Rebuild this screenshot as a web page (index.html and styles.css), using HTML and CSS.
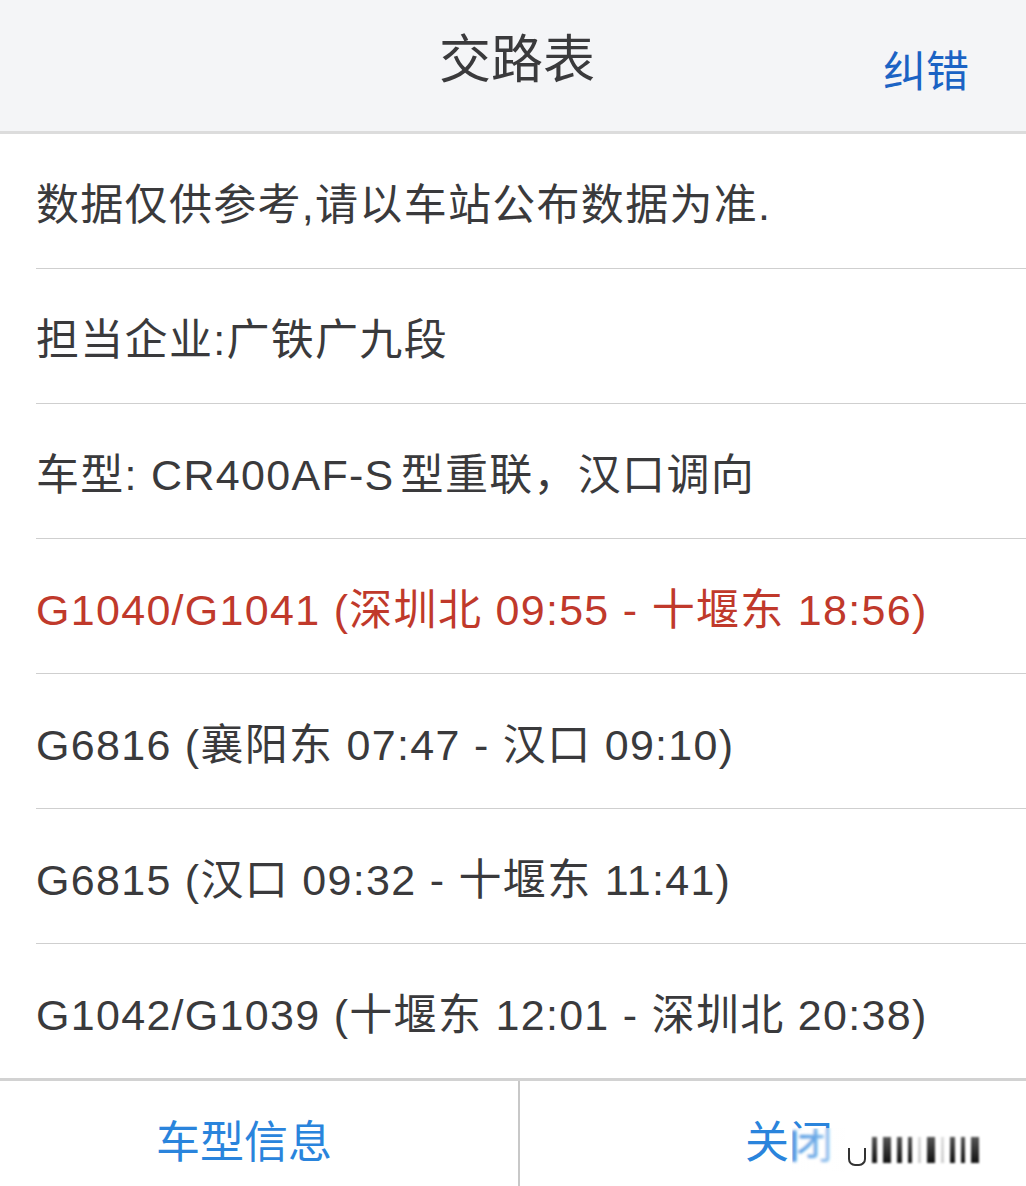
FILE: index.html
```html
<!DOCTYPE html>
<html lang="zh">
<head>
<meta charset="UTF-8">
<title>交路表</title>
<link rel="stylesheet" href="styles.css">
</head>
<body>
<div class="sheet">
  <div class="topbar">
    <span class="title">交路表</span>
    <a class="fix-btn">纠错</a>
  </div>
  <ul class="rows">
    <li class="row">数据仅供参考,请以车站公布数据为准.</li>
    <li class="row">担当企业:广铁广九段</li>
    <li class="row">车型: CR400AF-S<span class="gap"></span>型重联，汉口调向</li>
    <li class="row current">G1040/G1041 (深圳北 09:55 - 十堰东 18:56)</li>
    <li class="row">G6816 (襄阳东 07:47 - 汉口 09:10)</li>
    <li class="row">G6815 (汉口 09:32 - 十堰东 11:41)</li>
    <li class="row">G1042/G1039 (十堰东 12:01 - 深圳北 20:38)</li>
  </ul>
  <div class="actions">
    <a class="action left">车型信息</a>
    <a class="action right">关闭</a>
  </div>
  <!-- blurred watermark over the close button -->
  <div class="watermark">
    <span class="wm-u"></span>
    <i class="b1"></i><i class="b2"></i><i class="b1"></i><i class="b3"></i>
    <i class="gap-b"></i><i class="b2"></i><i class="gap-b"></i>
    <i class="b1"></i><i class="b3"></i><i class="b2"></i>
  </div>
</div>
</body>
</html>
```

FILE: styles.css
```css
body {
  margin: 0;
  font-family: 'Liberation Sans', 'Noto Sans CJK SC', sans-serif;
  color: #3a3a3c;
  background: #ffffff;
}
.sheet {
  position: relative;
  width: 1026px;
  height: 1186px;
  overflow: hidden;
  display: flex;
  flex-direction: column;
}
.topbar {
  position: relative;
  height: 131px;
  background-color: #f4f5f7;
  border-bottom: 3px solid #dcdcdc;
  display: flex;
  justify-content: center;
  align-items: center;
}
.title {
  font-size: 52px;
  color: #3a3a3c;
  margin-bottom: 20px;
  margin-left: 8px;
}
.fix-btn {
  position: absolute;
  right: 57px;
  top: 37px;
  font-size: 43px;
  color: #1b63c4;
}
.rows {
  list-style: none;
  margin: 0;
  padding: 0 0 0 36px;
}
.row {
  height: 134px;
  border-bottom: 1px solid #cfcfcf;
  display: flex;
  align-items: center;
  font-size: 43px;
  letter-spacing: 1.3px;
  white-space: nowrap;
}
.row:last-child {
  border-bottom: none;
}
.gap {
  display: inline-block;
  width: 6px;
}
.current {
  color: #c0392b;
}
.actions {
  flex: 1;
  display: grid;
  grid-template-columns: 518px 1fr;
  border-top: 3px solid #d2d2d2;
}
.action {
  display: flex;
  justify-content: center;
  align-items: center;
  font-size: 44px;
  color: #2a84dc;
  padding-top: 10px;
}
.action.left {
  padding-right: 30px;
}
.action.right {
  border-left: 2px solid #c8c8c8;
  padding-left: 32px;
}
.watermark {
  position: absolute;
  left: 792px;
  top: 1128px;
  width: 214px;
  height: 44px;
  display: flex;
  align-items: center;
  gap: 6px;
  padding-left: 56px;
  box-sizing: border-box;
  background: linear-gradient(90deg, rgba(255,255,255,0), rgba(255,255,255,0.5) 18%, rgba(255,255,255,0.9) 30%);
  backdrop-filter: blur(1.5px);
}
.watermark i {
  display: block;
  height: 26px;
  background: linear-gradient(#555, #111);
  filter: blur(1px);
}
.watermark .b1 { width: 5px; }
.watermark .b2 { width: 8px; }
.watermark .b3 { width: 4px; }
.watermark .gap-b { width: 3px; opacity: 0.2; }
.wm-u {
  width: 14px;
  height: 16px;
  margin-top: 14px;
  border: 2px solid #333;
  border-top: none;
  border-radius: 0 0 7px 7px;
  filter: blur(0.6px);
}
```
